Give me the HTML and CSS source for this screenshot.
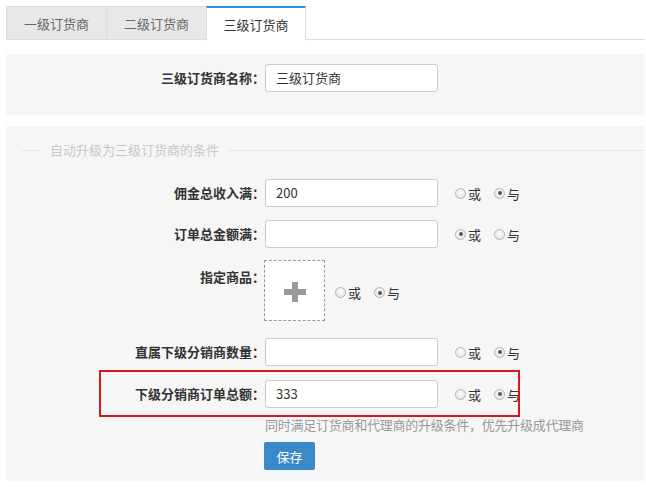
FILE: index.html
```html
<!DOCTYPE html>
<html lang="zh">
<head>
<meta charset="utf-8">
<link rel="stylesheet" href="styles.css">
</head>
<body>
<div class="page">
  <div class="tabs">
    <div class="tab">一级订货商</div>
    <div class="tab">二级订货商</div>
    <div class="tab active">三级订货商</div>
  </div>

  <div class="panel panel-name">
    <div class="row">
      <label class="label">三级订货商名称：</label>
      <div class="input">三级订货商</div>
    </div>
  </div>

  <div class="panel panel-cond">
    <div class="legend"><span class="legend-text">自动升级为三级订货商的条件</span></div>

    <div class="row row-1">
      <label class="label">佣金总收入满：</label>
      <div class="input">200</div>
      <div class="radios">
        <span class="radio"></span><span class="rtext">或</span>
        <span class="radio checked"></span><span class="rtext">与</span>
      </div>
    </div>

    <div class="row row-2">
      <label class="label">订单总金额满：</label>
      <div class="input"></div>
      <div class="radios">
        <span class="radio checked"></span><span class="rtext">或</span>
        <span class="radio"></span><span class="rtext">与</span>
      </div>
    </div>

    <div class="row row-3">
      <label class="label label-top">指定商品：</label>
      <div class="upload">
        <svg width="22" height="20" viewBox="0 0 22 20"><rect x="8" y="0" width="6" height="20" fill="#999"/><rect x="0" y="7" width="22" height="6" fill="#999"/></svg>
      </div>
      <div class="radios radios-upload">
        <span class="radio"></span><span class="rtext">或</span>
        <span class="radio checked"></span><span class="rtext">与</span>
      </div>
    </div>

    <div class="row row-4">
      <label class="label">直属下级分销商数量：</label>
      <div class="input"></div>
      <div class="radios">
        <span class="radio"></span><span class="rtext">或</span>
        <span class="radio checked"></span><span class="rtext">与</span>
      </div>
    </div>

    <div class="row row-5">
      <div class="highlight"></div>
      <label class="label">下级分销商订单总额：</label>
      <div class="input">333</div>
      <div class="radios">
        <span class="radio"></span><span class="rtext">或</span>
        <span class="radio checked"></span><span class="rtext">与</span>
      </div>
    </div>

    <div class="hint">同时满足订货商和代理商的升级条件，优先升级成代理商</div>
    <div class="actions"><button class="btn">保存</button></div>
  </div>
</div>
</body>
</html>
```

FILE: styles.css
```css
* { box-sizing: border-box; }
html, body { margin: 0; padding: 0; background: #fff; }
body {
  font-family: "Noto Sans CJK SC", "Liberation Sans", sans-serif;
  font-size: 13px;
  color: #333;
  width: 646px;
  height: 487px;
  overflow: hidden;
}
.page { padding: 6px 1px 0 6px; }

.tabs {
  display: flex;
  height: 34px;
  border-bottom: 1px solid #ddd;
}
.tab {
  width: 100px;
  height: 34px;
  background: #e8e8e8;
  border: 1px solid #ddd;
  border-right: none;
  color: #666;
  display: flex;
  align-items: center;
  justify-content: center;
  line-height: 1;
}
.tab.active {
  width: 100px;
  background: #fff;
  color: #333;
  border-top: 2px solid #2f8fd8;
  border-right: 1px solid #ddd;
  border-bottom: none;
  height: 35px;
}

.panel {
  background: #f6f6f6;
}
.panel-name {
  margin-top: 14px;
  padding: 10px 0 23px;
}
.panel-cond {
  margin-top: 11px;
  padding: 17px 0 11px;
  height: 355px;
}

.row {
  display: flex;
  align-items: center;
  position: relative;
}
.label {
  width: 259px;
  flex: none;
  text-align: right;
  font-weight: bold;
  color: #333;
  line-height: 28px;
}
.label-top { align-self: flex-start; padding-top: 3px; }
.input {
  width: 173px;
  height: 28px;
  flex: none;
  background: #fff;
  border: 1px solid #ccc;
  border-radius: 3px;
  padding: 0 10px;
  line-height: 26px;
  color: #333;
}

.legend {
  display: flex;
  align-items: center;
  height: 14px;
  padding-left: 16px;
}
.legend::before {
  content: "";
  width: 18px;
  height: 1px;
  background: #e6e6e6;
}
.legend::after {
  content: "";
  flex: 1;
  height: 1px;
  background: #e6e6e6;
}
.legend-text {
  color: #c8c8c8;
  padding: 0 10px;
  line-height: 14px;
}

.row-1 { margin-top: 22px; }
.row-2 { margin-top: 13px; }
.row-3 { margin-top: 12px; }
.row-4 { margin-top: 17px; }
.row-5 { margin-top: 14px; }

.radios {
  display: flex;
  align-items: center;
  margin-left: 17px;
}
.radios-upload { margin-left: 10px; margin-top: 4px; }
.radio {
  width: 11px;
  height: 11px;
  border-radius: 50%;
  border: 1px solid #b5b5b5;
  background: radial-gradient(circle at 50% 40%, #fdfdfd, #dedede);
  position: relative;
  flex: none;
}
.radio.checked::after {
  content: "";
  position: absolute;
  left: 2.5px;
  top: 2.5px;
  width: 4px;
  height: 4px;
  border-radius: 50%;
  background: #555;
}
.rtext {
  margin-left: 2px;
  margin-right: 13px;
  color: #333;
}

.upload {
  width: 61px;
  height: 61px;
  flex: none;
  margin-left: -1px;
  border: 1px dashed #999;
  background: #fff;
  display: flex;
  align-items: center;
  justify-content: center;
}
.upload svg { display: block; margin-top: 2px; }

.highlight {
  position: absolute;
  left: 93px;
  top: -10px;
  width: 421px;
  height: 47px;
  border: 2px solid #d9161b;
  pointer-events: none;
}

.hint {
  margin: 9px 0 0 259px;
  color: #999;
  line-height: 16px;
  letter-spacing: -0.25px;
}
.actions { margin: 9px 0 0 258px; }
.btn {
  width: 51px;
  height: 28px;
  border: none;
  border-radius: 2px;
  background: #3a89c9;
  color: #fff;
  font-family: inherit;
  font-size: 13px;
  padding: 0;
  cursor: pointer;
}
```
